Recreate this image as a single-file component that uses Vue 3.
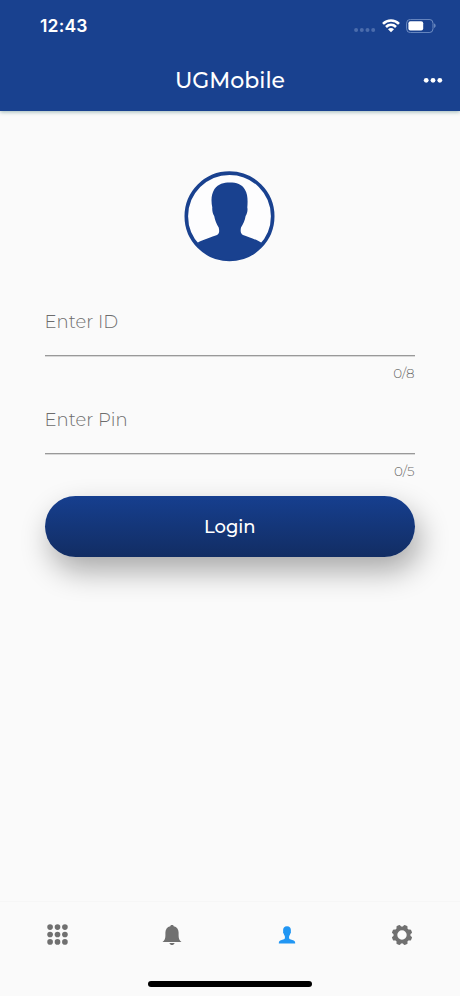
<script setup>
import { ref } from 'vue'

const id = ref('')
const pin = ref('')
const teeth = [22.5, 67.5, 112.5, 157.5, 202.5, 247.5, 292.5, 337.5]
const steps = [3, 10.2, 17.4]
</script>

<template>
  <div class="screen">
    <header class="header">
      <div class="status">
        <span class="time">12:43</span>
        <div class="indicators">
          <svg class="signal" width="22" height="4" viewBox="0 0 22 4">
            <circle v-for="n in 4" :key="n" :cx="n * 5.7 - 3.6" cy="2" r="2" />
          </svg>
          <svg class="wifi" width="18" height="14" viewBox="0 0 18 14">
            <path d="M1 4.800C5.500.3 12.500.3 17 4.800M4 8C6.900 5.200 11.100 5.200 14 8" fill="none" stroke="#fff" stroke-width="2.600" />
            <path d="M9 13.200L6 10.300C7.700 8.700 10.300 8.700 12 10.300Z" fill="#fff" />
          </svg>
          <svg class="battery" width="30" height="14" viewBox="0 0 30 14">
            <rect x=".6" y=".4" width="26.400" height="13.200" rx="3.800" fill="none" stroke="#7895c8" stroke-width=".9" />
            <rect x="2.400" y="2.200" width="14.800" height="9.400" rx="2" fill="#fff" />
            <path d="M28.200 4.600C30 5.200 30 8.400 28.200 9Z" fill="#7895c8" />
          </svg>
        </div>
      </div>
      <div class="appbar">
        <h1 class="title">UGMobile</h1>
        <button class="more" aria-label="More">
          <svg width="20" height="6" viewBox="0 0 20 6">
            <circle cx="3.200" cy="3.300" r="2.400" />
            <circle cx="10" cy="3.300" r="2.400" />
            <circle cx="16.800" cy="3.300" r="2.400" />
          </svg>
        </button>
      </div>
    </header>

    <main class="content">
      <svg class="avatar" width="92" height="92" viewBox="0 0 92 92">
        <circle cx="45.500" cy="46.300" r="43.200" fill="#fdfdfe" stroke="#19418f" stroke-width="3.600" />
        <path d="M13.500 72.800C19 69.500 28 67 33 65C35.500 63.500 35.500 61 34.700 57.500C32.700 54.500 31 50.500 30.200 46C28.800 44 28 40 28.300 37.500C27 31 27 24.500 30.500 19C34.500 14 39.500 12.600 45.700 12.600C52.700 12.600 57.700 14.400 60.700 19.300C64.200 24.500 63.700 32 63.300 37.500C64 40 63 44 61.600 46C61 50.500 59 54.500 57 57.500C56.300 61 56.500 63.500 59 65C64 67 72.500 69.500 77.500 72.800C71 83 59 89.700 45.500 89.700C32.500 89.700 20.500 83 13.500 72.800Z" fill="#19418f" />
      </svg>
      <form class="form" @submit.prevent>
        <label class="field">
          <input v-model="id" class="input" placeholder="Enter ID" maxlength="8">
          <span class="counter">{{ id.length }}/8</span>
        </label>
        <label class="field">
          <input v-model="pin" class="input" placeholder="Enter Pin" maxlength="5">
          <span class="counter">{{ pin.length }}/5</span>
        </label>
        <button class="login" type="submit">Login</button>
      </form>
    </main>

    <footer class="footer">
      <nav class="nav">
        <a class="tab">
          <svg width="21" height="21" viewBox="0 0 20.400 20.400">
            <template v-for="y in steps" :key="y">
              <circle v-for="x in steps" :key="x" :cx="x" :cy="y" r="2.750" />
            </template>
          </svg>
        </a>
        <a class="tab">
          <svg width="20" height="20" viewBox="0 0 20 20">
            <path d="M10 0C11 0 11.600.6 11.700 1.200C15 1.900 16.600 4.500 16.600 7.500V10.500C16.600 13.700 17.300 15.300 19.500 16.900H.5C2.700 15.300 3.400 13.700 3.400 10.500V7.500C3.400 4.500 5 1.900 8.300 1.200C8.400.6 9 0 10 0ZM7.400 17.900H12.600C12 19.200 11.200 20 10 20C8.800 20 8 19.200 7.400 17.900Z" />
          </svg>
        </a>
        <a class="tab active">
          <svg width="18" height="18" viewBox="0 0 18 18">
            <path d="M9 .3C11.800.3 13 2 12.900 4.500C12.900 5 12.700 5.500 12.900 5.700C13.100 6.700 12.600 7.200 12.300 7.700C12.100 8.800 11.600 9.500 11.200 10C11 11.300 10.900 12.300 11.500 12.900C13 13.700 15.800 13.900 16.700 15.200C17.100 15.900 17.200 16.600 17.200 17.400H.8C.8 16.600.9 15.900 1.300 15.200C2.200 13.900 5 13.700 6.500 12.900C7.100 12.300 7 11.300 6.800 10C6.400 9.500 5.900 8.800 5.700 7.700C5.400 7.200 4.900 6.700 5.100 5.700C5.300 5.500 5.100 5 5.100 4.500C5 2 6.200.3 9 .3Z" />
          </svg>
        </a>
        <a class="tab">
          <svg width="22" height="22" viewBox="-11 -11 22 22">
            <circle r="6.600" fill="none" stroke="currentColor" stroke-width="3.800" />
            <path v-for="a in teeth" :key="a" d="M-2.700-7L-2.100-9.500Q-1.800-10.300-1.200-10.300H1.200Q1.800-10.300 2.100-9.500L2.700-7Z" :transform="`rotate(${a})`" />
          </svg>
        </a>
      </nav>
      <div class="home-indicator"></div>
    </footer>
  </div>
</template>

<style>
body {
  margin: 0;
  background: #fafafa;
}
</style>

<style scoped>
.screen {
  display: flex;
  flex-direction: column;
  height: 996px;
  background: #fafafa;
  font-family: Montserrat, Inter, sans-serif;
}
.header {
  height: 111px;
  background: #19418f;
  color: #fff;
  box-shadow: 0 1px 4px rgba(0, 70, 70, 0.38);
}
.status {
  display: flex;
  justify-content: space-between;
  align-items: center;
  height: 51px;
  padding: 0 24px 0 40px;
}
.time {
  font: 600 17.500px/20px Inter, sans-serif;
  letter-spacing: 0.200px;
}
.indicators {
  display: flex;
  align-items: center;
}
.signal {
  margin: 9px 6px 0 0;
  fill: #4b6cac;
}
.wifi {
  margin-right: 6px;
}
.appbar {
  display: grid;
  grid-template-columns: 60px 1fr 60px;
  align-items: center;
  height: 58px;
}
.title {
  grid-column: 2;
  margin: 0;
  text-align: center;
  font-size: 22px;
  font-weight: 500;
}
.more {
  display: flex;
  justify-content: flex-end;
  padding: 0 17px 0 0;
  border: 0;
  background: none;
  fill: #fff;
}
.content {
  display: flex;
  flex: 1;
  flex-direction: column;
  align-items: center;
  padding: 59px 45px 0 44.500px;
}
.avatar {
  display: block;
}
.form {
  width: 100%;
  padding-top: 31px;
}
.field {
  display: block;
  height: 98px;
}
.input {
  display: block;
  box-sizing: border-box;
  width: 100%;
  height: 63px;
  padding: 0 0 5px;
  border: 0;
  border-bottom: 1px solid #999;
  border-radius: 0;
  outline: none;
  background: none;
  box-shadow: 0 1px #d8d8d8;
  font: 350 18px Montserrat, Inter, sans-serif;
}
.input::placeholder {
  color: #6c6c6c;
  opacity: 1;
}
.counter {
  display: block;
  padding: 8px 0.500px 0 0;
  text-align: right;
  font-size: 13.500px;
  font-weight: 350;
  line-height: 18px;
  color: #6c6c6c;
}
.login {
  display: block;
  width: 100%;
  height: 61px;
  margin-top: 7px;
  padding: 0;
  border: 0;
  border-radius: 31px;
  background: linear-gradient(#163f8f, #122d63);
  box-shadow: 5px 14px 30px rgba(0, 0, 0, 0.33);
  color: #fff;
  font: 500 18px Montserrat, Inter, sans-serif;
}
.footer {
  display: flex;
  flex-direction: column;
  align-items: center;
  height: 94px;
  border-top: 1px solid #f6f6f6;
}
.nav {
  display: grid;
  grid-template-columns: repeat(4, 1fr);
  box-sizing: border-box;
  width: 100%;
  height: 65px;
  padding-right: 1px;
}
.tab {
  display: flex;
  align-items: center;
  justify-content: center;
  color: #707070;
  fill: currentColor;
}
.tab.active {
  color: #2196f3;
}
.home-indicator {
  width: 164px;
  height: 6px;
  margin-top: 14px;
  border-radius: 3px;
  background: #000;
}
</style>
